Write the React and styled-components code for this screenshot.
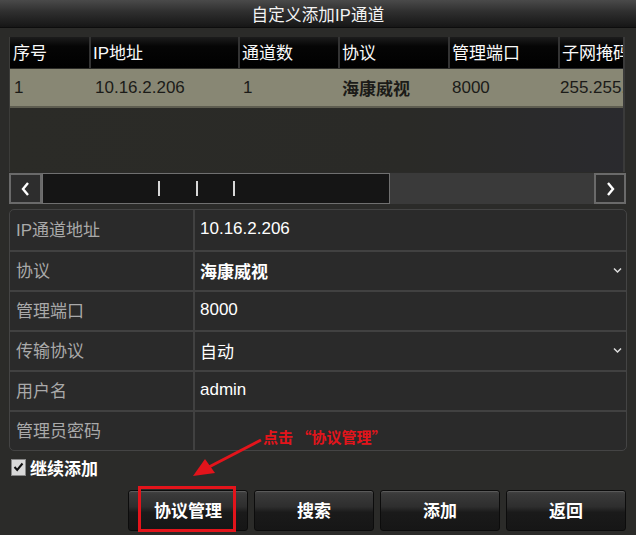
import React from "react";
import styled, { createGlobalStyle } from "styled-components";

const Global = createGlobalStyle`
  html, body { margin: 0; padding: 0; background: #2b2b29; }
  body { font-family: "Liberation Sans", "Noto Sans CJK SC", sans-serif; }
  * { box-sizing: border-box; }
`;

const Window = styled.div`
  position: relative;
  width: 636px;
  height: 535px;
  background: #2b2b29;
  display: flex;
  flex-direction: column;
  overflow: hidden;
  color: #fff;
  font-size: 17px;
`;

const TitleBar = styled.div`
  height: 28px;
  flex: none;
  display: flex;
  align-items: center;
  justify-content: center;
  background: linear-gradient(#4a4a4a 0%, #2e2e2e 45%, #161616 100%);
  border-bottom: 1px solid #0d0d0d;
  font-size: 16.5px;
  color: #f4f4f4;
  letter-spacing: 0.2px;
`;

const Content = styled.div`
  padding: 9px 9px 0 9px;
  display: flex;
  flex-direction: column;
`;

const TablePanel = styled.div`
  height: 135px;
  width: 616px;
  overflow: hidden;
  background: linear-gradient(90deg, #2b2b27 0%, #2a2a27 65%, #2a2a2e 100%);
  border-left: 1px solid #3c3c3a;
  border-right: 2px solid #3a3a3a;
`;

const Row = styled.div`
  display: grid;
  grid-template-columns: 79px 149px 100px 110px 110px 120px;
  width: 668px;
`;

const HeaderRow = styled(Row)`
  height: 31px;
  background: linear-gradient(#1c1c1c 0%, #050505 30%, #000 100%);
`;

const HeadCell = styled.div`
  display: flex;
  align-items: center;
  padding-left: ${(p) => p.$pad || 3}px;
  padding-bottom: 3px;
  border-left: ${(p) => (p.$first ? "none" : "2px solid #333")};
  color: #fafafa;
  white-space: nowrap;
`;

const DataRow = styled(Row)`
  height: 39px;
  margin-top: 1px;
  background: #888774;
  border-bottom: 2px solid #5e5d50;
`;

const DataCell = styled.div`
  display: flex;
  align-items: center;
  padding-left: ${(p) => p.$pad || 6}px;
  color: #1b1b18;
  font-weight: ${(p) => (p.$bold ? 700 : 400)};
  white-space: nowrap;
`;

const ScrollBar = styled.div`
  margin-top: 1px;
  height: 31px;
  width: 617px;
  display: flex;
  background: #3a3a3a;
`;

const ScrollBtn = styled.div`
  width: ${(p) => p.$w}px;
  flex: none;
  display: flex;
  align-items: center;
  justify-content: center;
  background: #2d2d2d;
  border: 2px solid #6a6a6a;
`;

const Thumb = styled.div`
  width: 348px;
  flex: none;
  background: #151515;
  border: 1px solid #707070;
  position: relative;
`;

const Grip = styled.span`
  position: absolute;
  top: 7px;
  width: 2px;
  height: 15px;
  background: #d8d8d8;
`;

const Track = styled.div`
  flex: 1;
`;

const Form = styled.div`
  margin-top: 5px;
  width: 618px;
  border: 1px solid #444;
  border-radius: 5px;
  background: #2a2a2a;
  display: flex;
  flex-direction: column;
  overflow: hidden;
`;

const FormRow = styled.div`
  display: grid;
  grid-template-columns: 185px 1fr;
  height: 40px;
  border-top: ${(p) => (p.$first ? "none" : "2px solid #414141")};
`;

const Label = styled.div`
  display: flex;
  align-items: center;
  padding-left: 6px;
  padding-bottom: 3px;
  color: #a9a9a9;
  border-right: 2px solid #414141;
`;

const Value = styled.div`
  display: flex;
  align-items: center;
  justify-content: space-between;
  padding: 0 4px 2px 5px;
  color: #fff;
  font-weight: ${(p) => (p.$bold ? 700 : 400)};
`;

const CheckRow = styled.div`
  height: 28px;
  margin-top: 3px;
  display: flex;
  align-items: center;
  gap: 4px;
  padding-left: 2px;
  padding-bottom: 2px;
  font-weight: 700;
  color: #fff;
`;

const CheckBox = styled.span`
  width: 15px;
  height: 17px;
  background: #d9d9d9;
  border: 1px solid #888;
  display: flex;
  align-items: center;
  justify-content: center;
`;

const ButtonRow = styled.div`
  margin-top: 8px;
  display: flex;
  justify-content: flex-end;
  gap: 6px;
  padding-right: 1px;
`;

const Button = styled.div`
  width: 120px;
  height: 41px;
  display: flex;
  align-items: center;
  justify-content: center;
  padding-bottom: 2px;
  border: 1px solid #0c0c0c;
  border-radius: 3px;
  background: linear-gradient(#454545 0%, #3a3a3a 8%, #2e2e2e 40%, #1a1a1a 55%, #161616 100%);
  box-shadow: inset 0 1px 0 #5a5a5a;
  font-weight: 700;
  color: #fff;
`;

const RedBox = styled.div`
  position: absolute;
  left: 138px;
  top: 486px;
  width: 98px;
  height: 46px;
  border: 3px solid #e3141b;
`;

const Note = styled.div`
  position: absolute;
  left: 263px;
  top: 426px;
  font-size: 15px;
  font-weight: 700;
  color: #e3141b;
  white-space: pre;
  font-family: "Noto Sans CJK SC", sans-serif;
`;

const Arrow = styled.svg`
  position: absolute;
  left: 185px;
  top: 432px;
`;

const Chevron = ({ dir }) => (
  <svg width="9" height="14" viewBox="0 0 9 14">
    <path
      d={dir === "left" ? "M7 1 L2 7 L7 13" : "M2 1 L7 7 L2 13"}
      fill="none"
      stroke="#fff"
      strokeWidth="2.4"
    />
  </svg>
);

const Drop = () => (
  <svg width="9" height="7" viewBox="0 0 9 7">
    <path d="M1 1.5 L4.5 5 L8 1.5" fill="none" stroke="#ddd" strokeWidth="1.5" />
  </svg>
);

const headers = ["序号", "IP地址", "通道数", "协议", "管理端口", "子网掩码"];
const data = [
  { t: "1", pad: 4 },
  { t: "10.16.2.206" },
  { t: "1", pad: 5 },
  { t: "海康威视", bold: true, pad: 4 },
  { t: "8000", pad: 4 },
  { t: "255.255.255.0", pad: 2 },
];

const fields = [
  { label: "IP通道地址", value: "10.16.2.206" },
  { label: "协议", value: "海康威视", bold: true, drop: true },
  { label: "管理端口", value: "8000" },
  { label: "传输协议", value: "自动", drop: true },
  { label: "用户名", value: "admin" },
  { label: "管理员密码", value: "" },
];

export default function App() {
  return (
    <>
      <Global />
      <Window>
        <TitleBar>自定义添加IP通道</TitleBar>
        <Content>
          <TablePanel>
            <HeaderRow>
              {headers.map((h, i) => (
                <HeadCell key={h} $first={i === 0} $pad={i === 0 ? 3 : 2}>
                  {h}
                </HeadCell>
              ))}
            </HeaderRow>
            <DataRow>
              {data.map((d, i) => (
                <DataCell key={i} $bold={d.bold} $pad={d.pad}>
                  {d.t}
                </DataCell>
              ))}
            </DataRow>
          </TablePanel>
          <ScrollBar>
            <ScrollBtn $w={33}>
              <Chevron dir="left" />
            </ScrollBtn>
            <Thumb>
              <Grip style={{ left: 115 }} />
              <Grip style={{ left: 153 }} />
              <Grip style={{ left: 190 }} />
            </Thumb>
            <Track />
            <ScrollBtn $w={32}>
              <Chevron dir="right" />
            </ScrollBtn>
          </ScrollBar>
          <Form>
            {fields.map((f, i) => (
              <FormRow key={f.label} $first={i === 0}>
                <Label>{f.label}</Label>
                <Value $bold={f.bold}>
                  <span>{f.value}</span>
                  {f.drop && <Drop />}
                </Value>
              </FormRow>
            ))}
          </Form>
          <CheckRow>
            <CheckBox>
              <svg width="11" height="10" viewBox="0 0 11 10">
                <path d="M1.5 5 L4.2 8 L9.5 1.5" fill="none" stroke="#111" strokeWidth="2" />
              </svg>
            </CheckBox>
            继续添加
          </CheckRow>
          <ButtonRow>
            <Button>协议管理</Button>
            <Button>搜索</Button>
            <Button>添加</Button>
            <Button>返回</Button>
          </ButtonRow>
        </Content>
        <Note>点击 “协议管理”</Note>
        <Arrow width="80" height="50" viewBox="0 0 80 50">
          <line x1="76" y1="8" x2="22" y2="36" stroke="#e3141b" strokeWidth="3" />
          <polygon points="8,44 20,27 30,41" fill="#e3141b" />
        </Arrow>
        <RedBox />
      </Window>
    </>
  );
}
